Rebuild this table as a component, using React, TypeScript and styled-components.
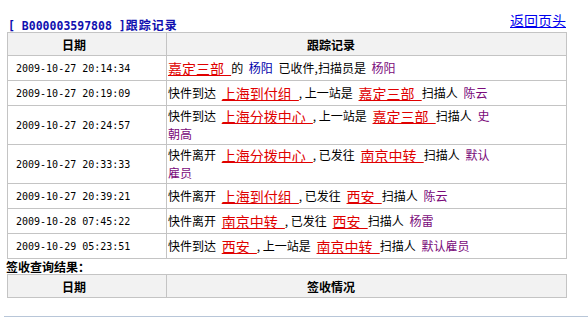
import * as React from "react";
import styled, {createGlobalStyle} from "styled-components";

const GlobalStyle = createGlobalStyle`
    body {
        margin: 0;
        background: #fff;
        font-family: "Noto Sans CJK SC", sans-serif;
        font-size: 12px;
        color: #000;
    }
`;

const Page = styled.div`
    width: 560px;
    padding-left: 7px;
`;

const TopBar = styled.div`
    display: flex;
    justify-content: space-between;
    align-items: flex-end;
    height: 32px;
`;

const Title = styled.div`
    font-weight: bold;
    color: #1010b0;
    line-height: 14px;
    margin: 0 0 -1px 1px;

    .no {
        font-family: "DejaVu Sans Mono", monospace;
        font-size: 11.5px;
    }

    .cn {
        letter-spacing: 1px;
    }
`;

const BackLink = styled.a`
    font-size: 14px;
    line-height: 16px;
    color: #0000ee;
    text-decoration: underline;
    margin: 0 1px 4px 0;
`;

const Table = styled.table`
    width: 560px;
    table-layout: fixed;
    border-collapse: collapse;
    border: 1px solid #c4c4c4;

    td, th {
        border: 1px solid #c4c4c4;
        padding: 0;
    }
`;

const Col = styled.col<{ $width?: number }>`
    width: ${p => (p.$width ? `${p.$width}px` : "auto")};
`;

const HeadCell = styled.th<{ $indent: number }>`
    height: 22px;
    background: #f2f2f2;
    text-align: left;
    font-weight: bold;
    padding-left: ${p => p.$indent}px !important;
`;

const DateCell = styled.td`
    height: 24px;
    padding-left: 8px !important;
    vertical-align: middle;
    font-family: "DejaVu Sans Mono", monospace;
    font-size: 10px;
    white-space: nowrap;
`;

const RecordCell = styled.td`
    padding: 1px 0 1px 1px !important;
    vertical-align: middle;
`;

const RecordText = styled.div`
    width: 328px;
    line-height: 18px;
    word-spacing: 3px;

    .comma {
        display: inline-block;
        width: 6px;
    }
`;

const Place = styled.a`
    font-size: 14px;
    line-height: 18px;
    vertical-align: top;
    color: #e00000;
    text-decoration: underline;
    word-spacing: 4px;
`;

const Person = styled.span<{ $tone: "blue" | "purple" }>`
    color: ${p => (p.$tone === "blue" ? "#0000aa" : "#7a0a7a")};
`;

const SectionLabel = styled.div`
    font-weight: bold;
    line-height: 14px;
    margin: 1px 0 0 -1px;
    height: 14px;
`;

const Divider = styled.div`
    margin: 18px 0 0 -3px;
    width: 584px;
    border-top: 1px solid #b8c6d8;
`;

type Seg = [kind: "t" | "p" | "b" | "n", text: string];

const records: { date: string; segs: Seg[] }[] = [
    {date: "2009-10-27 20:14:34", segs: [["p", "嘉定三部 "], ["t", "的 "], ["b", "杨阳"], ["t", " 已收件,扫描员是 "], ["n", "杨阳"]]},
    {date: "2009-10-27 20:19:09", segs: [["t", "快件到达 "], ["p", "上海到付组 "], ["t", ",上一站是 "], ["p", "嘉定三部 "], ["t", "扫描人 "], ["n", "陈云"]]},
    {date: "2009-10-27 20:24:57", segs: [["t", "快件到达 "], ["p", "上海分拨中心 "], ["t", ",上一站是 "], ["p", "嘉定三部 "], ["t", "扫描人 "], ["n", "史朝高"]]},
    {date: "2009-10-27 20:33:33", segs: [["t", "快件离开 "], ["p", "上海分拨中心 "], ["t", ",已发往 "], ["p", "南京中转 "], ["t", "扫描人 "], ["n", "默认雇员"]]},
    {date: "2009-10-27 20:39:21", segs: [["t", "快件离开 "], ["p", "上海到付组 "], ["t", ",已发往 "], ["p", "西安 "], ["t", "扫描人 "], ["n", "陈云"]]},
    {date: "2009-10-28 07:45:22", segs: [["t", "快件离开 "], ["p", "南京中转 "], ["t", ",已发往 "], ["p", "西安 "], ["t", "扫描人 "], ["n", "杨雷"]]},
    {date: "2009-10-29 05:23:51", segs: [["t", "快件到达 "], ["p", "西安 "], ["t", ",上一站是 "], ["p", "南京中转 "], ["t", "扫描人 "], ["n", "默认雇员"]]},
];

// text runs may start with a half-width comma, give it the old SimSun width
function renderText(text: string) {
    if (!text.startsWith(",")) return text;
    return <><span className="comma">,</span>{text.slice(1)}</>;
}

function renderSeg([kind, text]: Seg, i: number) {
    switch (kind) {
        case "p":
            return <Place key={i} href="#">{text}</Place>;
        case "b":
            return <Person key={i} $tone="blue">{text}</Person>;
        case "n":
            return <Person key={i} $tone="purple">{text}</Person>;
        default:
            return <React.Fragment key={i}>{renderText(text)}</React.Fragment>;
    }
}

const HeadRow = ({label}: { label: string }) => <>
    <colgroup>
        <Col $width={159}/>
        <Col/>
    </colgroup>
    <thead>
    <tr>
        <HeadCell $indent={54}>日期</HeadCell>
        <HeadCell $indent={140}>{label}</HeadCell>
    </tr>
    </thead>
</>;

export default function App() {
    return <Page>
        <GlobalStyle/>
        <TopBar>
            <Title><span className="no">[ B000003597808 ]</span><span className="cn">跟踪记录</span></Title>
            <BackLink href="#">返回页头</BackLink>
        </TopBar>
        <Table>
            <HeadRow label="跟踪记录"/>
            <tbody>
            {records.map(r => <tr key={r.date}>
                <DateCell>{r.date}</DateCell>
                <RecordCell><RecordText>{r.segs.map(renderSeg)}</RecordText></RecordCell>
            </tr>)}
            </tbody>
        </Table>
        <SectionLabel>签收查询结果：</SectionLabel>
        <Table>
            <HeadRow label="签收情况"/>
        </Table>
        <Divider/>
    </Page>;
}
